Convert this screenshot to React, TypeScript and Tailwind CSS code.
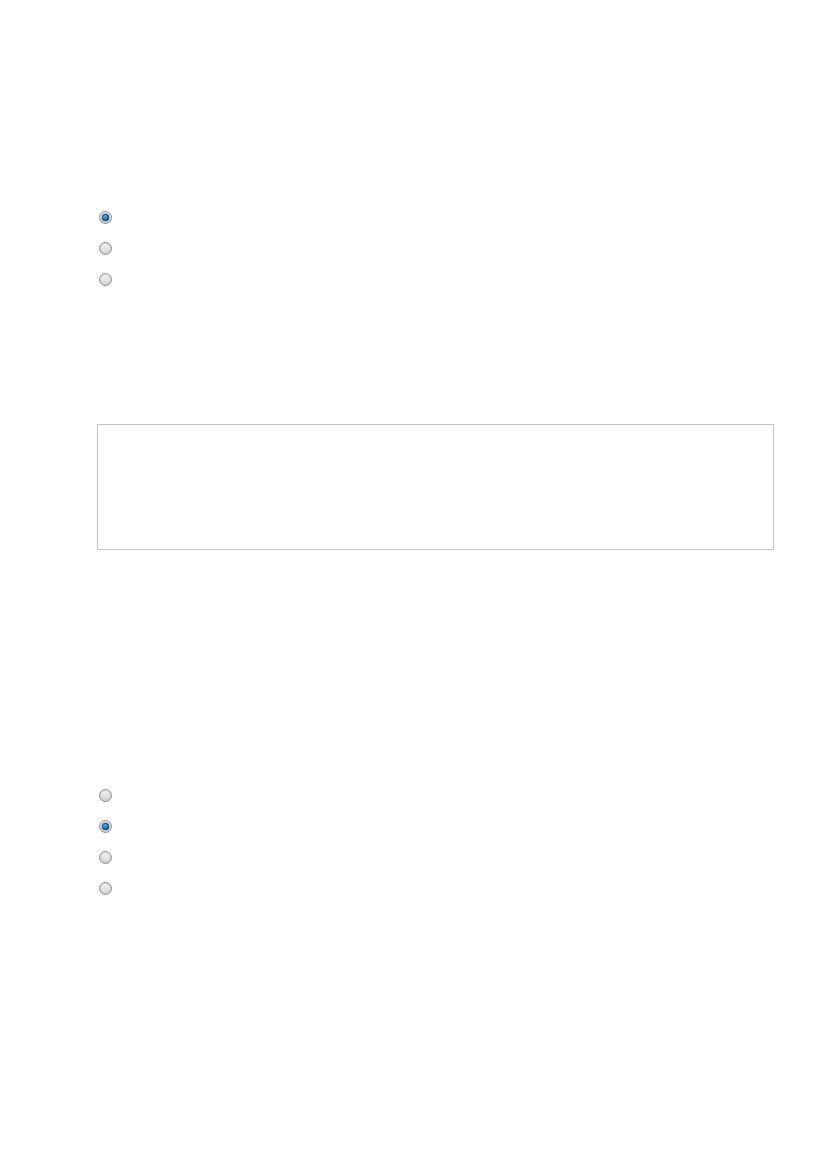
import React from 'react'

// Small glossy radio drawn as svg so the look stays the same in every browser
function Radio({ checked }: { checked?: boolean }) {
  return (
    <svg width="13" height="13" viewBox="0 0 13 13" className="shrink-0">
      <defs>
        <linearGradient id="rFace" x1="0" y1="0" x2="0" y2="1">
          <stop offset="0" stopColor="#f6f6f6" />
          <stop offset="1" stopColor="#d2d2d2" />
        </linearGradient>
        <radialGradient id="rDot" cx="0.4" cy="0.35" r="0.7">
          <stop offset="0" stopColor="#4fb0e8" />
          <stop offset="0.6" stopColor="#1a76b8" />
          <stop offset="1" stopColor="#0d4f80" />
        </radialGradient>
      </defs>
      <circle cx="6.5" cy="6.5" r="6" fill="url(#rFace)" stroke="#8e8e8e" strokeWidth="1" />
      {checked ? (
        <>
          <circle cx="6.5" cy="6.5" r="4.6" fill="#ffffff" stroke="#b8b8b8" strokeWidth="0.6" />
          <circle cx="6.5" cy="6.5" r="3.5" fill="url(#rDot)" stroke="#1d3f5c" strokeWidth="0.8" />
        </>
      ) : (
        <circle cx="6.5" cy="6.5" r="4.9" fill="none" stroke="#c4c4c4" strokeWidth="0.7" />
      )}
    </svg>
  )
}

function RadioGroup({ options, value }: { options: string[]; value: string }) {
  return (
    <div className="flex flex-col" role="radiogroup">
      {options.map((opt) => (
        <div key={opt} role="radio" aria-checked={opt === value} aria-label={opt} className="flex h-[31px] items-center pl-[2px]">
          <Radio checked={opt === value} />
        </div>
      ))}
    </div>
  )
}

export default function App() {
  return (
    <div className="min-h-[1169px] w-full bg-white pl-[97px] pt-[202px]">
      <RadioGroup options={['a', 'b', 'c']} value="a" />

      {/* free text field */}
      <div className="mt-[129px] h-[126px] w-[677px] border border-[#c4c4c4] bg-white" />

      <div className="mt-[230px]">
        <RadioGroup options={['1', '2', '3', '4']} value="2" />
      </div>
    </div>
  )
}
